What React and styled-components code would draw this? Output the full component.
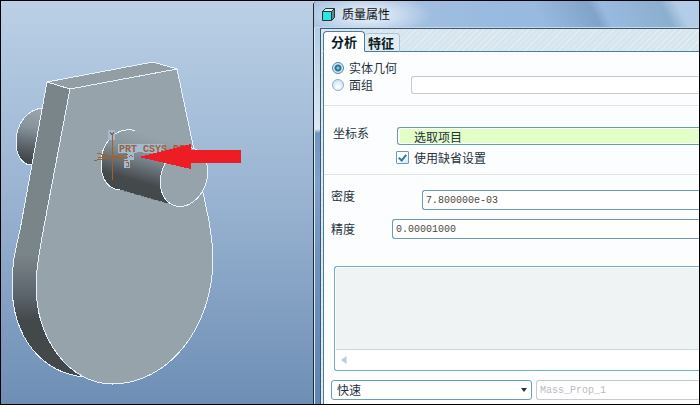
import { useState } from "react";
import styled, { createGlobalStyle } from "styled-components";

const GlobalStyle = createGlobalStyle`
  *,
  *::before,
  *::after {
    box-sizing: border-box;
  }

  :root {
    --color-ink: #26323c;
    --color-edge: #1c2836;
    --color-teal: #6b9cb2;
    --color-teal-dark: #4a7f9b;
    --color-page: #fcfdff;
    --color-muted: #b9bcbf;
    --font-ui: "Noto Sans CJK SC", "Liberation Sans", sans-serif;
    --font-value: "Liberation Mono", "Noto Sans CJK SC", monospace;
  }

  body {
    margin: 0;
    font-family: var(--font-ui);
    font-size: 12px;
    line-height: 16px;
    color: var(--color-ink);
  }

  input,
  textarea,
  select,
  button {
    margin: 0;
    font: inherit;
    color: inherit;
  }
`;

const Workspace = styled.main`
  display: grid;
  grid-template-columns: minmax(0, 312fr) minmax(0, 386fr);
  min-height: 100vh;
  border: 1px solid #000;
  overflow: hidden;
`;

const Viewport = styled.section`
  display: flex;
  background: linear-gradient(#bbd0e6, #94afce 55%, #6e8eb5);
`;

const Model = styled.svg`
  display: block;
  width: 100%;
  height: auto;
  align-self: flex-start;
`;

const Edge = styled.path`
  fill: ${({ fill }) => fill || "none"};
  stroke: #e6f3ff;
  stroke-width: 1;
  shape-rendering: crispEdges;
`;

const AxisText = styled.text`
  font-family: var(--font-value);
  font-size: 10px;
  font-weight: 700;
  fill: #9c6230;
`;

const Dialog = styled.section`
  display: flex;
  flex-direction: column;
  border-left: 1px solid var(--color-edge);
  border-top-left-radius: 4px;
  box-shadow: inset 1px 0 #dceaf6;
  background: linear-gradient(
    #a9c6e5 0,
    #b8d0e6 40px,
    #dce8f2 128px,
    #7195bf 132px,
    #7fa2ca 180px,
    #6f95be 250px,
    #5f85ae 100%
  );
`;

const TitleBar = styled.header`
  display: flex;
  align-items: center;
  gap: 7px;
  height: 27px;
  padding-left: 8px;
  border-bottom: 1px solid #c5d9ec;
  border-top-left-radius: 4px;
  background:
    radial-gradient(ellipse 64px 22px at 54px 14px, #e6effacc 30%, #e6effa00),
    linear-gradient(
      62deg,
      #96b9df00 58%,
      #80a3c9 72%,
      #98bae0 75%,
      #8bafce 90%,
      #b2cde7 94%
    ),
    linear-gradient(90deg, #a9c3e0, #98bae0 50%);
`;

const Title = styled.h1`
  margin: 0;
  font-size: 12px;
  line-height: 16px;
  font-weight: 400;
  color: #111;
`;

const Frame = styled.div`
  flex: 1;
  display: flex;
  flex-direction: column;
  margin-left: 6px;
  padding-left: 2px;
  border-top: 1px solid #40566f;
  border-left: 1px solid #40566f;
  background: repeating-linear-gradient(
    135deg,
    #d7e5ee 0 3px,
    #e2edf3 3px 4px
  );
`;

const Tabs = styled.div`
  display: flex;
  align-items: flex-end;
  height: 23px;
  border-bottom: 1px solid var(--color-teal-dark);
`;

const Tab = styled.button`
  height: ${({ $active }) => ($active ? 21 : 19)}px;
  margin-bottom: -1px;
  padding: ${({ $active }) => ($active ? "0 7px" : "0 5px 0 3px")};
  border: 1px solid ${({ $active }) => ($active ? "#4a7f9b" : "#a9c5d4")};
  border-left-width: ${({ $active }) => ($active ? 1 : 0)}px;
  border-bottom-color: ${({ $active }) => ($active ? "#fcfdff" : "#4a7f9b")};
  border-radius: 4px 4px 0 0;
  background: ${({ $active }) => ($active ? "#fcfdff" : "#e2edf3")};
  font-size: 13px;
  line-height: 16px;
  font-weight: 700;
  color: #0b1d26;
`;

const Form = styled.form`
  flex: 1;
  display: flex;
  flex-direction: column;
  border-left: 1px solid var(--color-teal-dark);
  background-color: var(--color-page);
`;

const Group = styled.div`
  display: flex;
  flex-direction: column;
  gap: ${({ $gap }) => $gap || 0}px;
  padding: ${({ $padding }) => $padding};
  border-bottom: ${({ $ruled }) => ($ruled ? "1px solid #e0e2e4" : "0")};
`;

const Row = styled.div`
  display: flex;
  align-items: ${({ $align }) => $align || "center"};
`;

const FieldLabel = styled.label`
  flex: none;
  width: ${({ $width }) => $width}px;
  line-height: 12px;
`;

const OptionLabel = styled.label`
  display: flex;
  align-items: center;
  gap: 5px;
  height: 17px;
  width: ${({ $width }) => ($width ? `${$width}px` : "auto")};
`;

const Radio = styled.input`
  appearance: none;
  width: 12px;
  height: 12px;
  border: 1px solid #8db0c6;
  border-radius: 50%;
  background: radial-gradient(circle at 50% 70%, #fff, #c4deed);

  &:checked {
    border-color: #4e86a6;
    background: radial-gradient(
      circle at 50% 50%,
      #8cc0dc 0 1px,
      #2f7397 2px,
      #2f7397 3px,
      #d5eaf5 4px
    );
  }
`;

const Checkbox = styled.input`
  appearance: none;
  display: grid;
  place-items: center;
  width: 13px;
  height: 13px;
  border: 1px solid var(--color-teal);
  border-radius: 1px;
  background: linear-gradient(135deg, #fff 40%, #d3e8f3);

  &:checked::before {
    content: "";
    width: 5px;
    height: 8px;
    margin-bottom: 2px;
    border: solid #3479a0;
    border-width: 0 2px 2px 0;
    transform: rotate(40deg);
  }
`;

const Field = styled.input`
  flex: 1;
  min-width: 0;
  width: 100%;
  height: ${({ $compact }) => ($compact ? 18 : 20)}px;
  padding: 0 3px;
  border: 1px solid var(--color-teal);
  border-right: 0;
  border-radius: 3px 0 0 3px;
  background-color: #fff;
  font-family: var(--font-value);
  font-size: 10px;
  color: #4e4640;
  outline: none;

  &:disabled {
    border-color: #c8cbce;
    color: var(--color-muted);
  }
`;

const PickField = styled(Field)`
  padding-left: 16px;
  background-color: #e2ffc8;
  box-shadow: inset 2px 1px #fff, inset 0 -1px #fff;
  font-family: var(--font-ui);
  font-size: 12px;
  color: var(--color-ink);
`;

const Results = styled.div`
  flex: 1;
  display: flex;
  flex-direction: column;
  min-height: 105px;
  margin: 27px 0 9px 10px;
  border: 1px solid #73acc7;
  border-right: 0;
  border-radius: 3px 0 0 3px;
  background-color: #fff;
`;

const ResultText = styled.textarea`
  flex: 1;
  min-height: 0;
  margin: 1px 0 0 1px;
  padding: 4px;
  border: 0;
  border-bottom: 1px solid #c2d8e5;
  resize: none;
  background-color: #eff3f4;
  outline: none;
`;

const ScrollTrack = styled.div`
  display: flex;
  align-items: center;
  height: 20px;
  padding-left: 6px;
`;

const ScrollButton = styled.button`
  display: flex;
  padding: 0;
  border: 0;
  background: none;
`;

const Footer = styled.div`
  display: grid;
  grid-template-columns: minmax(0, 201fr) minmax(0, 163fr);
  gap: 4px;
  padding: 0 0 4px 7px;
`;

const SelectWrapper = styled.div`
  position: relative;
`;

const Select = styled.select`
  appearance: none;
  display: block;
  width: 100%;
  height: 20px;
  padding: 0 20px 0 5px;
  border: 1px solid var(--color-teal);
  border-radius: 3px;
  background-color: #fff;
  outline: none;
`;

const SelectArrow = styled.svg`
  position: absolute;
  top: 8px;
  right: 5px;
  pointer-events: none;
`;

function CubeIcon() {
  return (
    <svg width="13" height="13" viewBox="0 0 13 13" aria-hidden="true">
      <path d="M1 3.5 3.5 .5H12.5V9.5L10 12.5H.5V3.5Z" fill="#5f8a8c" />
      <path d="M1.5 3 3.5 1H12L10 3Z" fill="#d9f3f3" />
      <path d="M1 3.5H10V12H1Z" fill="#28e7e5" />
      <path
        d="M.5 12.5V3.5L3.5 .5H12.5V9.5L9.5 12.5ZM.5 3.5H9.5V12.5M9.5 3.5 12.5 .5"
        fill="none"
        stroke="#24383c"
      />
    </svg>
  );
}

function PartModel() {
  return (
    <Model viewBox="1 1 312 403" role="img" aria-label="PRT_CSYS_DEF">
      <defs>
        <linearGradient id="side" x1="0" y1="0" x2="0" y2="1">
          <stop offset="0" stopColor="#7a8589" />
          <stop offset="0.57" stopColor="#7a8589" />
          <stop offset="0.71" stopColor="#5b636a" />
          <stop offset="0.79" stopColor="#43484b" />
          <stop offset="1" stopColor="#43484b" />
        </linearGradient>
        <linearGradient
          id="rearPin"
          gradientUnits="userSpaceOnUse"
          x1="36"
          y1="108"
          x2="26"
          y2="165"
        >
          <stop offset="0" stopColor="#9aa6ac" />
          <stop offset="0.35" stopColor="#87939a" />
          <stop offset="0.6" stopColor="#656e75" />
          <stop offset="0.9" stopColor="#43484b" />
        </linearGradient>
        <linearGradient
          id="frontPin"
          gradientUnits="userSpaceOnUse"
          x1="162"
          y1="139"
          x2="146"
          y2="197"
        >
          <stop offset="0" stopColor="#97a3aa" />
          <stop offset="0.3" stopColor="#87939a" />
          <stop offset="0.55" stopColor="#656e75" />
          <stop offset="0.78" stopColor="#454a4d" />
          <stop offset="1" stopColor="#43484b" />
        </linearGradient>
      </defs>

      <path d="M42 108 32 165 24 158 20 130Z" fill="url(#rearPin)" />
      <Edge
        d="M42 108C26 110 16 125 16 142C16 156 23 165 31 165"
        fill="url(#rearPin)"
      />
      <Edge
        d="M47 82 20 230C15 252 12 264 12 284C12 340 44 373 84 377L112 384L70 89Z"
        fill="url(#side)"
      />
      <Edge d="M47 82 153 62 177 69 70 89Z" fill="#929ea4" />
      <Edge
        d="M70 89 177 69 209 221C211 235 213 245 213 258C213 328 168 384 112 384C70 384 36 340 36 285C36 266 41 243 45 221Z"
        fill="#97a3aa"
      />

      {/* front pin: shaded body first, then its lit outline */}
      <path
        d="M135 130.500C115 126 101 144 101 163C101 178 107 189 120 190L174.2 205.6 193.8 148.4Z"
        fill="url(#frontPin)"
      />
      <Edge d="M135 130.500C115 126 101 144 101 163C101 178 107 189 120 190" />
      <path
        d="M120 190 174.2 205.6"
        stroke="#899da9"
        strokeDasharray="4 2"
        shapeRendering="crispEdges"
      />
      <Edge
        d="M193.8 148.4A22.8 30.2 19 0 1 174.2 205.6A22.8 30.2 19 0 1 193.8 148.4Z"
        fill="#97a3aa"
      />

      <g fill="#a2bad3">
        <rect x="108" y="130" width="7" height="10" />
        <rect x="118" y="144" width="46" height="9" />
        <rect x="127" y="153" width="7" height="7" />
        <rect x="124" y="159" width="6" height="9" />
      </g>
      <path
        d="M112.5 134V180M94 160.500 128 154M97 153 128 161M98 157H128M110 132 112 135 114 132M129 157 131 155 133 157M126 162H128V166H126"
        fill="none"
        stroke="#9c6230"
        shapeRendering="crispEdges"
      />
      <AxisText x="119" y="152">
        PRT_CSYS_DEF
      </AxisText>
      <path
        d="M139 157 191 144V150H241V163H191V169Z"
        fill="#ee1c25"
        shapeRendering="crispEdges"
      />
    </Model>
  );
}

function MassPropertiesForm() {
  const [source, setSource] = useState("solid");
  const [useDefault, setUseDefault] = useState(true);
  const isQuilt = source === "quilt";

  return (
    <Form>
      <Group $padding="7px 0 11px 8px" $ruled>
        <Row>
          <OptionLabel>
            <Radio
              type="radio"
              name="source"
              checked={!isQuilt}
              onChange={() => setSource("solid")}
            />
            实体几何
          </OptionLabel>
        </Row>
        <Row>
          <OptionLabel $width={79}>
            <Radio
              type="radio"
              name="source"
              checked={isQuilt}
              onChange={() => setSource("quilt")}
            />
            面组
          </OptionLabel>
          <Field $compact disabled={!isQuilt} aria-label="面组" />
        </Row>
      </Group>

      <Group $padding="21px 0 8px 9px" $gap={4} $ruled>
        <Row $align="flex-start">
          <FieldLabel htmlFor="csys" $width={64}>
            坐标系
          </FieldLabel>
          <PickField id="csys" $compact readOnly value="选取项目" />
        </Row>
        <Row>
          <FieldLabel as="span" $width={63} />
          <OptionLabel>
            <Checkbox
              type="checkbox"
              checked={useDefault}
              onChange={() => setUseDefault(!useDefault)}
            />
            使用缺省设置
          </OptionLabel>
        </Row>
      </Group>

      <Group $padding="15px 0 0 7px" $gap={9}>
        <Row $align="flex-start">
          <FieldLabel htmlFor="density" $width={91}>
            密度
          </FieldLabel>
          <Field id="density" defaultValue="7.800000e-03" />
        </Row>
        <Row>
          <FieldLabel htmlFor="accuracy" $width={61}>
            精度
          </FieldLabel>
          <Field id="accuracy" defaultValue="0.00001000" />
        </Row>
      </Group>

      <Results>
        <ResultText readOnly aria-label="质量属性" />
        <ScrollTrack>
          <ScrollButton type="button">
            <svg width="6" height="8" viewBox="0 0 6 8">
              <path d="M5.500 0V8L0 4Z" fill="#b7cedb" />
            </svg>
          </ScrollButton>
        </ScrollTrack>
      </Results>

      <Footer>
        <SelectWrapper>
          <Select aria-label="快速">
            <option>快速</option>
          </Select>
          <SelectArrow width="6" height="4" viewBox="0 0 6 4">
            <path d="M0 0H6L3 4Z" fill="#26323c" />
          </SelectArrow>
        </SelectWrapper>
        <Field disabled defaultValue="Mass_Prop_1" aria-label="Mass_Prop_1" />
      </Footer>
    </Form>
  );
}

function App() {
  const [tab, setTab] = useState("分析");

  return (
    <>
      <GlobalStyle />
      <Workspace>
        <Viewport>
          <PartModel />
        </Viewport>
        <Dialog>
          <TitleBar>
            <CubeIcon />
            <Title>质量属性</Title>
          </TitleBar>
          <Frame>
            <Tabs>
              {["分析", "特征"].map((name) => (
                <Tab
                  key={name}
                  type="button"
                  $active={tab === name}
                  onClick={() => setTab(name)}
                >
                  {name}
                </Tab>
              ))}
            </Tabs>
            <MassPropertiesForm />
          </Frame>
        </Dialog>
      </Workspace>
    </>
  );
}

export default App;
